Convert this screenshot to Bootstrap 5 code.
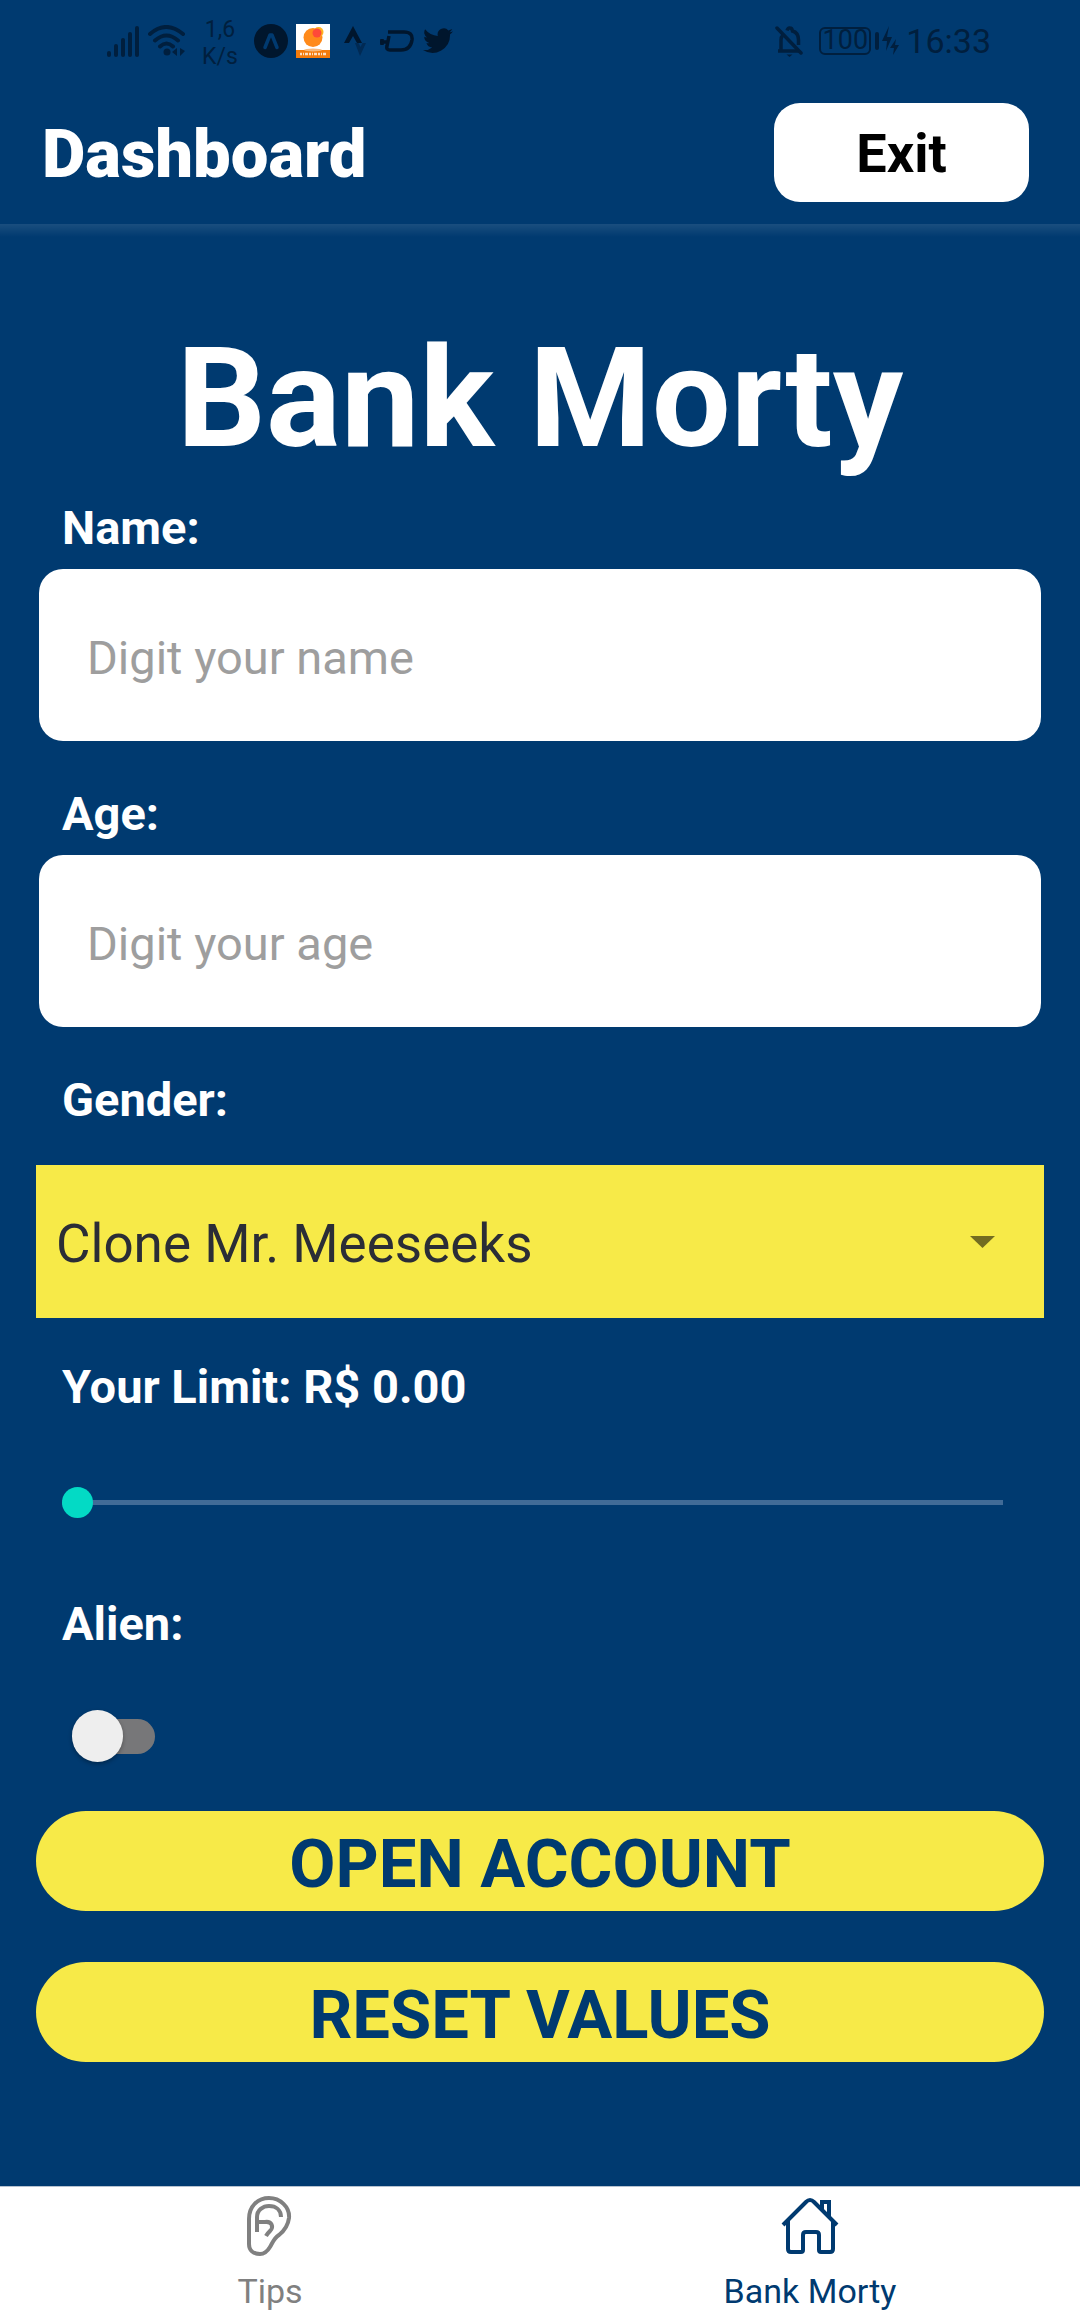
<!DOCTYPE html>
<html lang="en">
<head>
<meta charset="utf-8">
<meta name="viewport" content="width=device-width, initial-scale=1">
<title>Bank Morty</title>
<link href="https://cdn.jsdelivr.net/npm/bootstrap@5.3.0/dist/css/bootstrap.min.css" rel="stylesheet">
<style>
  :root { --navy: #003a70; --sun: #f7ea48; --ink: #001f3e; }
  body { background: var(--navy); color: #fff; font-family: Roboto, "Liberation Sans", sans-serif; }
  svg { display: block; flex: none; }

  .status-bar { height: 80px; padding: 2px 89px 0 107px; color: var(--ink); }
  .status-gap { margin-left: 14px; }
  .net-speed { font-size: 23px; line-height: 27px; width: 36px; padding-top: 4px; }
  .battery { font-size: 27px; line-height: 23px; border: 2px solid; border-radius: 6px; width: 52px; height: 28px; }
  .clock { font-size: 34px; line-height: 40px; }

  .app-header { height: 144px; padding: 0 51px 0 42px; }
  .app-header h1 { font-size: 67px; line-height: 80px; font-weight: 900; padding-top: 4px; }
  .btn-exit { --bs-btn-bg: #fff; --bs-btn-color: #000; --bs-btn-hover-bg: #eee; width: 255px; height: 99px; padding: 4px 0 0; border: 0; border-radius: 26px; font-size: 54px; line-height: 64px; font-weight: 700; }

  .app-main { padding: 92px 36px 0; background: linear-gradient(rgba(255,255,255,.1), rgba(255,255,255,0)) top / 100% 13px no-repeat; }
  .bank-title { font-size: 140px; line-height: 164px; font-weight: 700; margin-bottom: 20px; }
  .field-label { display: block; font-size: 47px; line-height: 56px; font-weight: 700; margin-left: 26px; }
  .text-field { margin: 13px 3px 45px; width: auto; align-self: stretch; height: 172px; padding: 4px 48px 0; border: 0; border-radius: 24px; font-size: 47px; line-height: 56px; color: #222; }
  .text-field::placeholder { color: #9e9e9e; opacity: 1; }
  .picker { height: 153px; margin: 37px 0 41px; padding: 4px 100px 0 20px; border: 0; border-radius: 0; font-size: 53px; line-height: 62px; color: #2b2d36; background-color: var(--sun);
    background-image: url("data:image/svg+xml,%3csvg xmlns='http://www.w3.org/2000/svg' viewBox='0 0 25 12'%3e%3cpath fill='%23736c21' d='M0 0h25L12.5 12z'/%3e%3c/svg%3e"); background-size: 25px 12px; background-position: right 49px center; }
  .limit-range { height: 31px; margin: 72px 41px 78px 26px; width: auto; align-self: stretch; }
  .limit-range::-webkit-slider-runnable-track { height: 5px; background: #416b97; border-radius: 0; }
  .limit-range::-webkit-slider-thumb { width: 31px; height: 31px; margin-top: -13px; background: #03dac5; }
  .limit-range::-moz-range-thumb { width: 31px; height: 31px; background: #03dac5; }
  .alien-switch { appearance: none; position: relative; width: 83px; height: 52px; margin: 58px 0 49px 36px; }
  .alien-switch::before, .alien-switch::after { content: ""; position: absolute; border-radius: 26px; }
  .alien-switch::before { inset: 9px 0 8px 8px; background: #777779; }
  .alien-switch::after { left: 0; top: 0; width: 51px; height: 52px; background: #eee; box-shadow: 0 2px 4px rgba(0,0,0,.3); }
  .alien-switch:checked::after { left: 32px; background: #03dac5; }
  .btn-sun { --bs-btn-bg: var(--sun); --bs-btn-color: var(--navy); --bs-btn-hover-bg: #e5d83c; height: 100px; padding: 6px 0 0; border: 0; font-size: 67px; line-height: 80px; font-weight: 700; }
  .app-actions { gap: 51px; margin-bottom: 60px; }

  .tab-bar { height: 126px; background: #fff; border-top: 1px solid #b5c2d1; }
  .tab-bar .nav-link { padding: 8px 0 0; color: #808080; font-size: 34px; line-height: 40px; gap: 14px; }
  .tab-bar .nav-link.active { color: var(--navy); }
</style>
</head>
<body class="d-flex flex-column min-vh-100">

<div class="status-bar d-flex align-items-center justify-content-between">
  <div class="d-flex align-items-center">
    <svg width="33" height="31" viewBox="0 0 33 31" stroke="currentColor" stroke-width="4" stroke-linecap="round"><path d="M2 27v2M9 20v9M16 14v15M23 8v21M30 2v27"/></svg>
    <svg class="ms-2" width="38" height="32" viewBox="0 0 38 32" fill="none" stroke="currentColor" stroke-width="4" stroke-linecap="round"><path d="M2 9Q18 -5 35 9M7 15.500q11.500-10 23 0M12 21.500q6.500-6 13 0"/><circle cx="19" cy="27" r="3.500" fill="currentColor" stroke="none"/><path d="M29 23v8l-5-4zM32 23v8l5-5z" fill="currentColor" stroke="none"/></svg>
    <div class="net-speed text-center ms-3">1,6<br>K/s</div>
    <svg class="ms-3" width="34" height="34" viewBox="0 0 34 34"><circle cx="17" cy="17" r="17" fill="#00162d"/><path d="M11 23.500L16 11h2l5 12.500" fill="none" stroke="var(--navy)" stroke-width="3.500" stroke-linecap="round" stroke-linejoin="round"/></svg>
    <svg class="ms-2" width="34" height="34" viewBox="0 0 34 34"><path fill="#fff" d="M0 0h34v34H0z"/><path fill="#f47b0b" d="M0 26h34v8H0z"/><ellipse cx="17" cy="26" rx="9" ry="1.500" fill="#f9ba7d"/><circle cx="17" cy="13.500" r="9.500" fill="#ff8a1a"/><circle cx="22.500" cy="8" r="5" fill="#ffb320"/><circle cx="21" cy="9" r="4.500" fill="#ff4a38"/><path d="M4 30h26" stroke="#fff" stroke-width="2.500" stroke-dasharray="2 1 1 1 3 1" opacity=".75"/></svg>
    <svg class="status-gap" width="22" height="30" viewBox="0 0 22 30"><path fill="#00162d" d="M9 0l9 17h-5L9 10l-4 7H0z"/><path fill="#002a54" d="M11 17h3.500l2 4 2-4H22l-6 13z"/></svg>
    <svg class="status-gap" width="34" height="22" viewBox="0 0 34 22" fill="none" stroke="#00162d" stroke-width="3.500"><path d="M8 2h16q9 0 8 8-1.500 10-11 10H10q-4 0-3-4l2-10M0 12h8M2 9v6" /></svg>
    <svg class="ms-2" width="32" height="26" viewBox="0 0 32 26"><path fill="#00162d" d="M31 3.200a12 12 0 0 1-3.400 1A6 6 0 0 0 30.200 1a12 12 0 0 1-3.800 1.400 6.200 6.200 0 0 0-10.600 5.600A17.500 17.500 0 0 1 3.100 1.300 6.200 6.200 0 0 0 5 9.600a6 6 0 0 1-2.800-.8c0 3 2 5.500 5 6.200a6 6 0 0 1-2.800.1 6.200 6.200 0 0 0 5.800 4.300A12.400 12.400 0 0 1 1 22a17.500 17.500 0 0 0 27-15.600A12 12 0 0 0 31 3.200z"/></svg>
  </div>
  <div class="d-flex align-items-center">
    <svg width="28" height="31" viewBox="0 0 28 31" fill="none" stroke="currentColor" stroke-width="3.500"><path d="M2 2l24 25" stroke-linecap="round"/><path d="M3 25h21M6 25V14q0-3 2-5M12 4.500q1-3 3-2.500 2 0 2.500 3 6 1.500 6 9v5"/><path d="M11.500 28.500h6l-3 2.500z" fill="currentColor" stroke="none"/></svg>
    <div class="battery d-flex justify-content-center ms-3">100</div>
    <svg class="ms-1" width="27" height="30" viewBox="0 0 27 30" fill="currentColor"><rect x="0" y="6" width="4" height="18" rx="2"/><path d="M14 0L7 15h5l-1 10 6-14h-5zM21 13l-6 9h4l-1 7 6-10h-4z"/></svg>
    <div class="clock ms-1">16:33</div>
  </div>
</div>

<header class="app-header d-flex align-items-center justify-content-between">
  <h1 class="m-0">Dashboard</h1>
  <button type="button" class="btn btn-exit">Exit</button>
</header>

<main class="app-main d-flex flex-column flex-grow-1">
  <h2 class="bank-title text-center">Bank Morty</h2>
  <form class="d-flex flex-column">
    <label class="field-label" for="name">Name:</label>
    <input class="form-control text-field" id="name" type="text" placeholder="Digit your name">
    <label class="field-label" for="age">Age:</label>
    <input class="form-control text-field" id="age" type="text" inputmode="numeric" placeholder="Digit your age">
    <label class="field-label" for="gender">Gender:</label>
    <select class="form-select picker" id="gender"><option>Clone Mr. Meeseeks</option></select>
    <label class="field-label" for="limit">Your Limit: R$ 0.00</label>
    <input class="form-range limit-range" id="limit" type="range" min="0" max="1000" value="0">
    <label class="field-label" for="alien">Alien:</label>
    <input class="alien-switch" id="alien" type="checkbox" role="switch">
    <div class="app-actions d-flex flex-column">
      <button type="submit" class="btn btn-sun rounded-pill">OPEN ACCOUNT</button>
      <button type="reset" class="btn btn-sun rounded-pill">RESET VALUES</button>
    </div>
  </form>
</main>

<nav class="tab-bar nav nav-fill flex-nowrap">
  <div class="nav-item w-50">
    <a class="nav-link d-flex flex-column align-items-center" href="#tips">
      <svg width="46" height="62" viewBox="0 0 46 62" fill="none" stroke="currentColor" stroke-width="4"><path d="M2 24C2 11 11 3 22 3s21 9 20 20c-1 8-5 13-10 17-5 3-6 7-9 12-3 5-6 7-10 7C6 59 2 55 2 49z"/><path d="M10 37V22c0-7 6-11 12-11 7 0 12 4 12 11M10 27h8c7-1 9 5 5 9-2 2-3 3-4 5"/></svg>
      <span>Tips</span>
    </a>
  </div>
  <div class="nav-item w-50">
    <a class="nav-link active d-flex flex-column align-items-center" href="#bank" aria-current="page">
      <svg width="58" height="62" viewBox="0 0 58 62" fill="none" stroke="currentColor" stroke-width="4"><path d="M2 30L25 7q4-4 8 0L56 30M7 26v28q0 3 3 3h10q2 0 2-2V40q0-3 3-3h10q3 0 3 3v15q0 2 2 2h9q3 0 3-3V25M41 15V7h7v15"/></svg>
      <span>Bank Morty</span>
    </a>
  </div>
</nav>

<script src="https://cdn.jsdelivr.net/npm/bootstrap@5.3.0/dist/js/bootstrap.bundle.min.js"></script>
</body>
</html>
